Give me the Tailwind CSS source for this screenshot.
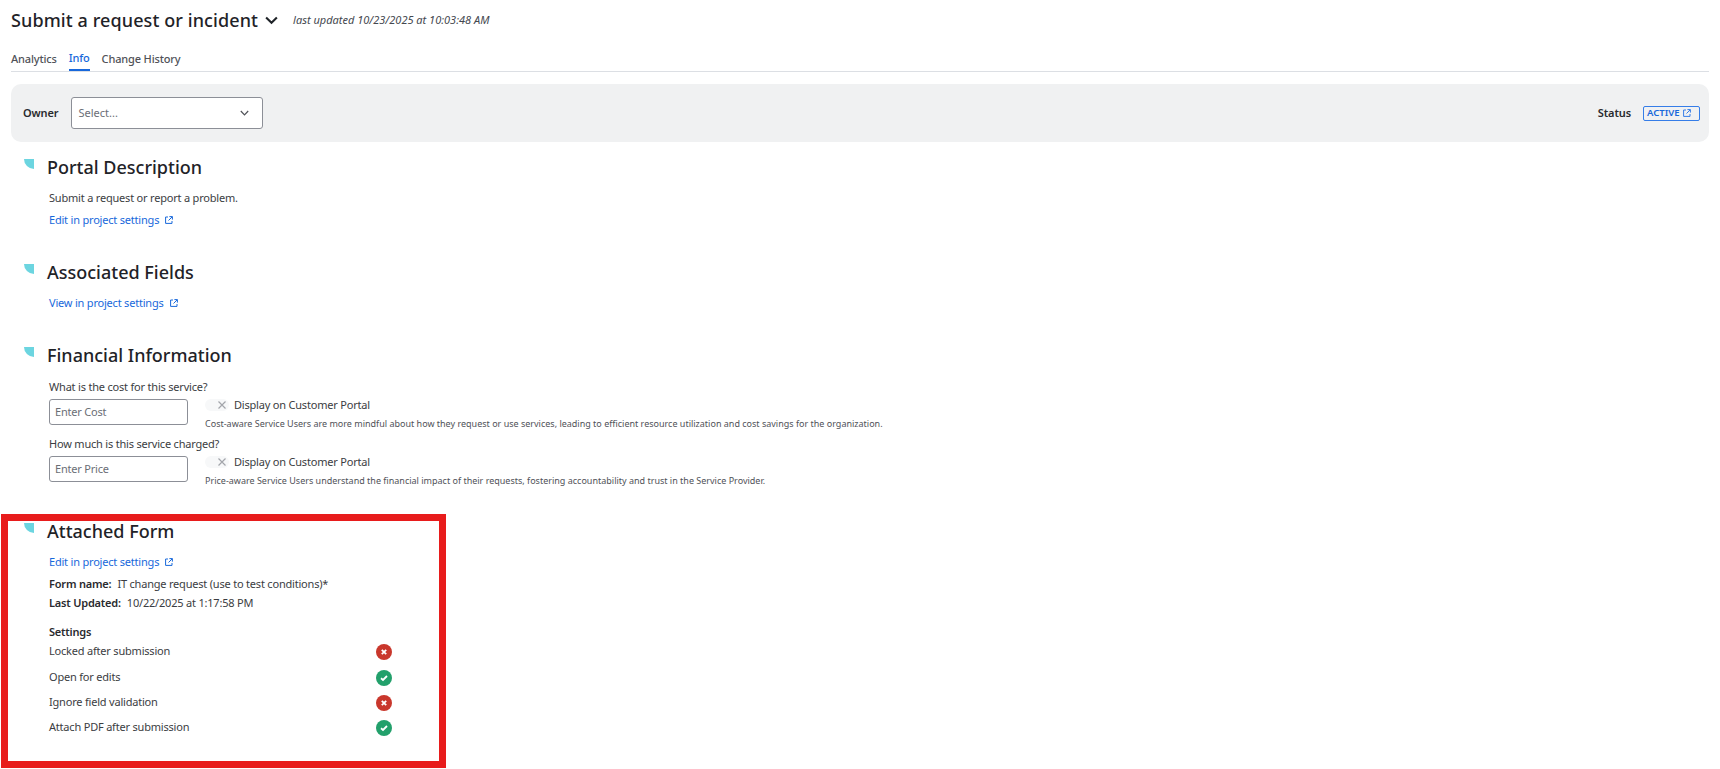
<!DOCTYPE html>
<html lang="en">
<head>
    <meta charset="UTF-8">
    <script src="https://cdn.jsdelivr.net/npm/@tailwindcss/browser@4"></script>
    <title>Submit a request or incident</title>
</head>
<body class="bg-white overflow-hidden font-['Noto_Sans',sans-serif] text-[#292a2e]">
<div class="relative w-[1720px] h-[769px] overflow-hidden">
    <div class="px-[11px]">
        <header class="flex items-center h-[40px]">
            <h1 class="text-[18px] leading-[40px] font-medium tracking-[0.1px] text-[#1f2328]">Submit a request or incident</h1>
            <svg class="ml-[7px] w-[13px] h-[9px]" viewBox="0 0 14 9" fill="none" stroke="#1f2328" stroke-width="2.2"><path d="M1.2 1.2 7 7l5.8-5.8"/></svg>
            <span class="ml-[15px] text-[11px] italic text-[#44484f]">last updated 10/23/2025 at 10:03:48 AM</span>
        </header>

        <nav class="flex gap-[12px] h-[32px] items-end border-b border-[#dcdfe4] text-[11px] tracking-[-0.15px] font-medium text-[#505258]">
            <a class="h-[20px]">Analytics</a>
            <a class="h-[21px] text-[#1868db] border-b-2 border-[#1868db]">Info</a>
            <a class="h-[20px]">Change History</a>
        </nav>

        <section class="flex items-center justify-between h-[58px] mt-[12px] pl-[12px] pr-[9px] rounded-[10px] bg-[#f0f1f2]">
            <div class="flex items-center">
                <span class="mt-[1px] text-[11px] tracking-[-0.1px] font-semibold mr-[12px]">Owner</span>
                <div class="flex items-center justify-between w-[192px] h-[32px] pl-[7px] pr-[13px] bg-white border border-[#8c8f97] rounded-[3px] text-[11px] text-[#6b6e76]">
                    <span>Select...</span>
                    <svg class="w-[9px] h-[6px]" viewBox="0 0 9 6" fill="none" stroke="#505258" stroke-width="1.2"><path d="M.8 1 4.5 4.8 8.2 1"/></svg>
                </div>
            </div>
            <div class="flex items-center">
                <span class="mt-[1px] text-[11px] tracking-[-0.1px] font-semibold mr-[12px]">Status</span>
                <span class="flex items-center justify-between w-[57px] h-[15px] pl-[3px] pr-[8px] border border-[#357de8] rounded-[2px] text-[9.5px] font-semibold text-[#1868db]">
                    ACTIVE
                    <svg class="w-[8px] h-[8px]" viewBox="0 0 8 8" fill="none" stroke="#357de8"><path d="M3 1H.6v6.4H7V5M4.4.6h3v3M7.2.8 3.5 4.5"/></svg>
                </span>
            </div>
        </section>

        <section class="mt-[13px] pl-[13px]">
            <div class="flex items-center h-[24px]">
                <span class="w-[10px] h-[10px] mb-[6px] bg-[#6cd5e0] rounded-bl-[10px]"></span>
                <h2 class="ml-[13px] text-[18px] font-medium text-[#1f2328]">Portal Description</h2>
            </div>
            <div class="pl-[25px] text-[11px] tracking-[-0.2px]">
                <p class="mt-[8px] h-[22px] leading-[22px] text-[#3b3d42]">Submit a request or report a problem.</p>
                <a class="flex items-center h-[22px] text-[#1868db]">Edit in project settings
                    <svg class="ml-[6px] w-[8px] h-[8px]" viewBox="0 0 8 8" fill="none" stroke="#1868db"><path d="M3 1H.6v6.4H7V5M4.4.6h3v3M7.2.8 3.5 4.5"/></svg>
                </a>
            </div>
        </section>

        <section class="mt-[29px] pl-[13px]">
            <div class="flex items-center h-[24px]">
                <span class="w-[10px] h-[10px] mb-[6px] bg-[#6cd5e0] rounded-bl-[10px]"></span>
                <h2 class="ml-[13px] text-[18px] font-medium text-[#1f2328]">Associated Fields</h2>
            </div>
            <div class="pl-[25px] text-[11px] tracking-[-0.2px]">
                <a class="flex items-center h-[22px] mt-[8px] text-[#1868db]">View in project settings
                    <svg class="ml-[6px] w-[8px] h-[8px]" viewBox="0 0 8 8" fill="none" stroke="#1868db"><path d="M3 1H.6v6.4H7V5M4.4.6h3v3M7.2.8 3.5 4.5"/></svg>
                </a>
            </div>
        </section>

        <section class="mt-[29px] pl-[13px]">
            <div class="flex items-center h-[24px]">
                <span class="w-[10px] h-[10px] mb-[6px] bg-[#6cd5e0] rounded-bl-[10px]"></span>
                <h2 class="ml-[13px] text-[18px] font-medium text-[#1f2328]">Financial Information</h2>
            </div>
            <div class="pl-[25px] text-[11px] tracking-[-0.2px]">
                <p class="mt-[12px] h-[16px] leading-[16px] text-[#3b3d42]">What is the cost for this service?</p>
                <div class="flex mt-[4px]">
                    <div class="flex items-center w-[139px] h-[26px] pl-[5px] bg-white border border-[#8c8f97] rounded-[3px] text-[#6b6e76]">Enter Cost</div>
                    <div class="ml-[17px]">
                        <div class="flex items-center h-[12px]">
                            <span class="flex items-center justify-end w-[24px] h-[12px] pr-[3px] rounded-full bg-[#f7f8f9]">
                                <svg class="w-[8px] h-[8px]" viewBox="0 0 8 8" stroke="#a3a5ab" stroke-width="1.2"><path d="m.5.5 7 7m0-7-7 7"/></svg>
                            </span>
                            <span class="ml-[5px] text-[#3b3d42]">Display on Customer Portal</span>
                        </div>
                        <p class="mt-[6px] text-[9px] tracking-normal leading-[13px] text-[#505258]">Cost-aware Service Users are more mindful about how they request or use services, leading to efficient resource utilization and cost savings for the organization.</p>
                    </div>
                </div>
                <p class="mt-[6px] h-[16px] leading-[16px] text-[#3b3d42]">How much is this service charged?</p>
                <div class="flex mt-[4px]">
                    <div class="flex items-center w-[139px] h-[26px] pl-[5px] bg-white border border-[#8c8f97] rounded-[3px] text-[#6b6e76]">Enter Price</div>
                    <div class="ml-[17px]">
                        <div class="flex items-center h-[12px]">
                            <span class="flex items-center justify-end w-[24px] h-[12px] pr-[3px] rounded-full bg-[#f7f8f9]">
                                <svg class="w-[8px] h-[8px]" viewBox="0 0 8 8" stroke="#a3a5ab" stroke-width="1.2"><path d="m.5.5 7 7m0-7-7 7"/></svg>
                            </span>
                            <span class="ml-[5px] text-[#3b3d42]">Display on Customer Portal</span>
                        </div>
                        <p class="mt-[6px] text-[9px] tracking-normal leading-[13px] text-[#505258]">Price-aware Service Users understand the financial impact of their requests, fostering accountability and trust in the Service Provider.</p>
                    </div>
                </div>
            </div>
        </section>

        <section class="mt-[32px] pl-[13px]">
            <div class="flex items-center h-[24px]">
                <span class="w-[10px] h-[10px] mb-[6px] bg-[#6cd5e0] rounded-bl-[10px]"></span>
                <h2 class="ml-[13px] text-[18px] font-medium text-[#1f2328]">Attached Form</h2>
            </div>
            <div class="pl-[25px] text-[11px] tracking-[-0.2px]">
                <a class="flex items-center h-[22px] mt-[8px] text-[#1868db]">Edit in project settings
                    <svg class="ml-[6px] w-[8px] h-[8px]" viewBox="0 0 8 8" fill="none" stroke="#1868db"><path d="M3 1H.6v6.4H7V5M4.4.6h3v3M7.2.8 3.5 4.5"/></svg>
                </a>
                <p class="h-[19px] leading-[19px] mt-[1px] text-[#3b3d42]"><b class="font-semibold text-[#292a2e] mr-[6px]">Form name:</b>IT change request (use to test conditions)*</p>
                <p class="h-[19px] leading-[19px] text-[#3b3d42]"><b class="font-semibold text-[#292a2e] mr-[6px]">Last Updated:</b>10/22/2025 at 1:17:58 PM</p>
                <p class="mt-[10px] h-[19px] leading-[19px] font-semibold">Settings</p>
                <ul class="w-[344px] mt-[1px] text-[#3b3d42]">
                    <li class="flex justify-between h-[26px] pr-[1px] pt-[1px]">Locked after submission
                        <svg class="w-[16px] h-[16px] mt-[1px]" viewBox="0 0 16 16"><circle cx="8" cy="8" r="8" fill="#c9372c"/><path d="m5.8 5.8 4.4 4.4m0-4.4-4.4 4.4" stroke="#fff" stroke-width="1.8"/></svg></li>
                    <li class="flex justify-between h-[25px] pr-[1px] pt-[1px]">Open for edits
                        <svg class="w-[16px] h-[16px] mt-[1px]" viewBox="0 0 16 16"><circle cx="8" cy="8" r="8" fill="#22a06b"/><path d="M5 8.3 7 10l4-4" fill="none" stroke="#fff" stroke-width="1.8"/></svg></li>
                    <li class="flex justify-between h-[25px] pr-[1px] pt-[1px]">Ignore field validation
                        <svg class="w-[16px] h-[16px] mt-[1px]" viewBox="0 0 16 16"><circle cx="8" cy="8" r="8" fill="#c9372c"/><path d="m5.8 5.8 4.4 4.4m0-4.4-4.4 4.4" stroke="#fff" stroke-width="1.8"/></svg></li>
                    <li class="flex justify-between h-[25px] pr-[1px] pt-[1px]">Attach PDF after submission
                        <svg class="w-[16px] h-[16px] mt-[1px]" viewBox="0 0 16 16"><circle cx="8" cy="8" r="8" fill="#22a06b"/><path d="M5 8.3 7 10l4-4" fill="none" stroke="#fff" stroke-width="1.8"/></svg></li>
                </ul>
            </div>
        </section>
    </div>

    <!-- red annotation box over the form section -->
    <div class="absolute left-[1px] top-[514px] w-[445px] h-[254px] border-[7px] border-[#e81c1c] pointer-events-none"></div>
</div>
</body>
</html>
